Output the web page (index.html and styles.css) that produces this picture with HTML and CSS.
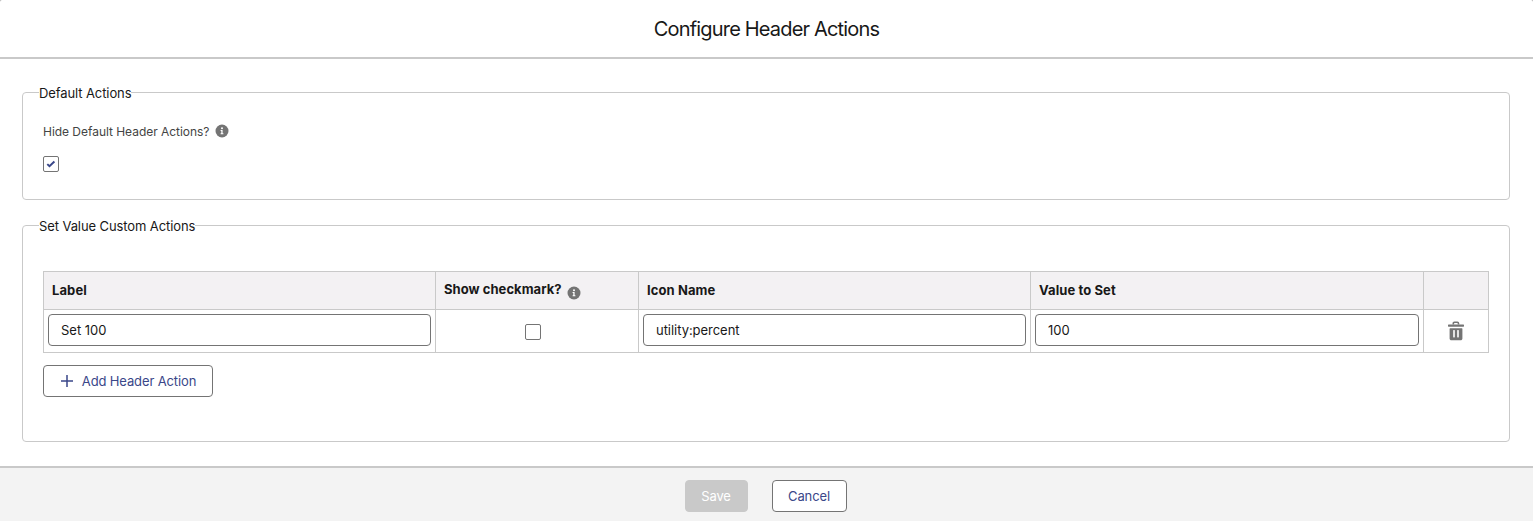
FILE: index.html
```html
<!DOCTYPE html>
<html lang="en">
<head>
<meta charset="utf-8">
<title>Configure Header Actions</title>
<link rel="stylesheet" href="styles.css">
</head>
<body>
<div class="modal">
  <header class="modal-header"><h1 class="title">Configure Header Actions</h1></header>
  <main class="modal-body">
    <fieldset class="group group-default">
      <legend class="legend">Default Actions</legend>
      <div class="group-content">
        <div class="field-label"><span class="field-text">Hide Default Header Actions?</span>
          <svg class="info" viewBox="0 0 14 14"><circle cx="7" cy="7" r="6.5" fill="#747474"/><circle cx="7" cy="4.3" r="1" fill="#fff"/><path d="M5.600 6h2v3.200h.8v1H5.600v-1h.7V7h-.7z" fill="#fff"/></svg>
        </div>
        <span class="checkbox checked"><svg class="check" viewBox="0 0 10 8"><path d="M1.300 4.100l2.200 2.100 4.900-4.600" fill="none" stroke="#3a4789" stroke-width="2"/></svg></span>
      </div>
    </fieldset>
    <fieldset class="group group-custom">
      <legend class="legend">Set Value Custom Actions</legend>
      <div class="group-content">
        <table class="actions">
          <colgroup><col class="col-label"><col class="col-check"><col class="col-icon"><col class="col-value"><col class="col-delete"></colgroup>
          <thead>
            <tr>
              <th>Label</th>
              <th><div class="th-check"><span>Show checkmark?</span>
                <svg class="info" viewBox="0 0 14 14"><circle cx="7" cy="7" r="6.5" fill="#747474"/><circle cx="7" cy="4.3" r="1" fill="#fff"/><path d="M5.600 6h2v3.200h.8v1H5.600v-1h.7V7h-.7z" fill="#fff"/></svg></div></th>
              <th>Icon Name</th>
              <th>Value to Set</th>
              <th></th>
            </tr>
          </thead>
          <tbody>
            <tr>
              <td><div class="input">Set 100</div></td>
              <td class="check-cell"><span class="checkbox"></span></td>
              <td><div class="input input-icon">utility:percent</div></td>
              <td><div class="input">100</div></td>
              <td><svg class="trash" viewBox="0 0 18 20"><path d="M6.300 3.500V2.400c0-.7.4-1.100 1.100-1.100h3c.7 0 1.100.4 1.100 1.100v1.100" fill="none" stroke="#747474" stroke-width="1.600"/><path d="M1.600 3.500h14.800c.4 0 .6.2.6.6v1c0 .4-.2.6-.6.6H1.600c-.4 0-.6-.2-.6-.6v-1c0-.4.2-.6.6-.6z" fill="#747474"/><path fill-rule="evenodd" d="M3.100 7.200h11.800c.3 0 .5.2.5.5v9.700c0 1.100-.8 1.800-1.800 1.800H4.400c-1 0-1.800-.7-1.800-1.800V7.700c0-.3.2-.5.5-.5zM6.200 9.600v6.400c0 .3.2.5.5.5h.6c.3 0 .5-.2.5-.5V9.600c0-.3-.2-.5-.5-.5h-.6c-.3 0-.5.2-.5.5zm4 0v6.400c0 .3.2.5.5.5h.6c.3 0 .5-.2.5-.5V9.600c0-.3-.2-.5-.5-.5h-.6c-.3 0-.5.2-.5.5z" fill="#747474"/></svg></td>
            </tr>
          </tbody>
        </table>
        <button class="button add" type="button"><svg class="plus" viewBox="0 0 12 12"><path d="M6 .3v11.400M.3 6h11.400" stroke="#3a4789" stroke-width="1.500" stroke-linecap="round"/></svg><span>Add Header Action</span></button>
      </div>
    </fieldset>
  </main>
  <footer class="modal-footer">
    <button class="button save" type="button" disabled>Save</button>
    <button class="button cancel" type="button">Cancel</button>
  </footer>
</div>
</body>
</html>
```
FILE: styles.css
```css
* { box-sizing: border-box; }
body { margin: 0; background: #a8a8a8; color: #181818; font: 13px/17px Inter, "Liberation Sans", sans-serif; }
.modal { height: 521px; display: flex; flex-direction: column; overflow: hidden; background: #fff; border-radius: 2px 2px 0 0; }
.modal-header { height: 59px; flex: none; display: flex; align-items: center; justify-content: center; padding-top: 2px; border-bottom: 2px solid #c9c9c9; }
.title { margin: 0; font-size: 20px; line-height: 25px; font-weight: 400; letter-spacing: -0.83px; }
.modal-body { flex: 1; padding: 25px 23px 0 22px; }
.group { margin: 0; padding: 0 20px 0 16px; border: 1px solid #c9c9c9; border-radius: 4px; min-width: 0; }
.group-default { height: 116px; margin-bottom: 17px; }
.group-custom { height: 225px; }
.legend { padding: 0; height: 17px; line-height: 18px; letter-spacing: -0.1px; white-space: nowrap; }
.group-content { padding-left: 4px; }
.field-label { display: flex; align-items: center; gap: 6px; height: 18px; margin-top: 21px; font-size: 12px; letter-spacing: -0.035px; color: #444; }
.info { display: block; width: 14px; height: 14px; }
.checkbox { display: flex; align-items: center; justify-content: center; width: 16px; height: 16px; border: 1px solid #747474; border-radius: 2px; background: #fff; }
.checked { margin-top: 16px; }
.check { width: 10px; height: 8px; }
.actions { width: 1446px; margin-top: 37px; table-layout: fixed; border-collapse: collapse; }
.col-label, .col-icon { width: 392px; }
.col-check { width: 203px; }
.col-value { width: 393px; }
.col-delete { width: 65px; }
.actions th { height: 38px; padding: 0 8px; text-align: left; font-weight: 700; letter-spacing: 0.1px; background: #f3f1f3; border: 1px solid #c9c9c9; vertical-align: middle; }
.actions td { height: 43px; padding: 4px 4px 6px; border: 1px solid #c9c9c9; vertical-align: top; }
.th-check { display: flex; gap: 5px; align-items: flex-start; height: 20px; letter-spacing: 0.05px; }
.th-check .info { margin-top: 5px; }
.input { height: 32px; padding: 0 12px; line-height: 30px; border: 1px solid #747474; border-radius: 4px; }
.input-icon { letter-spacing: -0.04px; }
.actions .check-cell { padding: 14px 12px 0 4px; }
.check-cell .checkbox { margin: 0 auto; }
.trash { display: block; width: 18px; height: 20px; margin: 7px auto 0; }
.button { height: 32px; padding: 0; display: flex; align-items: center; justify-content: center; border: 1px solid #747474; border-radius: 4px; background: #fff; color: #3a4789; font: inherit; }
.add { width: 170px; margin-top: 12px; padding-left: 1px; gap: 9px; letter-spacing: -0.13px; }
.plus { width: 12px; height: 12px; }
.modal-footer { height: 55px; flex: none; display: flex; justify-content: center; gap: 24px; padding: 12px 2px 0 0; border-top: 2px solid #c9c9c9; background: #f3f3f3; }
.save { width: 63px; border-color: #c9c9c9; background: #c9c9c9; color: #fff; letter-spacing: -0.1px; }
.cancel { width: 75px; letter-spacing: -0.1px; }
```
